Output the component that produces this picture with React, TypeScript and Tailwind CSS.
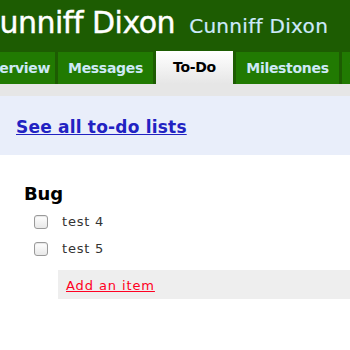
export default function App() {
  const tabs = [
    { label: "Overview", w: "w-[81px]", ml: "-ml-[26px]" },
    { label: "Messages", w: "w-[95px]" },
    { label: "To-Do", w: "w-[77px]", active: true },
    { label: "Milestones", w: "w-[103px]" },
    { label: "Writeboards", w: "w-[110px]" },
  ];

  return (
    <div className="w-[350px] h-[350px] overflow-hidden bg-white font-['DejaVu_Sans',sans-serif]">
      <div className="bg-[#1d5c02]">
        <div className="h-[52px] flex items-baseline whitespace-nowrap pt-[5px]">
          <h1 className="-ml-[21px] text-[30px] leading-[36px] text-white tracking-[-0.5px] [-webkit-text-stroke:0.4px_white]">Cunniff Dixon</h1>
          <span className="ml-[14px] text-[20px] text-[#cdeafc] tracking-[0.3px] [-webkit-text-stroke:0.2px_#cdeafc]">Cunniff Dixon</span>
        </div>
        <div className="flex gap-[3px] h-[32px] whitespace-nowrap">
          {tabs.map((t) => (
            <div
              key={t.label}
              className={`${t.w} ${t.ml ?? ""} shrink-0 flex items-center justify-center text-[14px] font-bold tracking-[-0.3px] ${
                t.active
                  ? "bg-gradient-to-b from-white to-[#e6e6e6] text-black -mt-[1px] h-[33px]"
                  : "bg-[#217a02] text-[#cde9f6]"
              }`}
            >
              {t.label}
            </div>
          ))}
        </div>
      </div>
      <div className="h-[12px] bg-[#e6e6e6]" />
      <div className="h-[59px] bg-[#e9eefa] flex items-center pl-[16px]">
        <a href="#" className="text-[17px] font-bold text-[#2222c2] underline tracking-[0.2px] pt-[4px]">
          See all to-do lists
        </a>
      </div>
      <div className="pl-[24px] pt-[28px]">
        <h2 className="text-[18px] font-bold text-black leading-[22px] tracking-[-0.2px]">Bug</h2>
        <ul className="mt-[7px] flex flex-col gap-[7px]">
          {["test 4", "test 5"].map((item) => (
            <li key={item} className="flex items-center h-[20px] pl-[10px] text-[13px] text-[#333] tracking-[0.8px]">
              <span className="w-[14px] h-[14px] rounded-[3px] border border-[#9a9a9a] bg-gradient-to-b from-white to-[#e8e8e8] shadow-[inset_0_1px_1px_rgba(0,0,0,0.1)]" />
              <span className="ml-[14px]">{item}</span>
            </li>
          ))}
        </ul>
        <div className="ml-[34px] mt-[11px] h-[29px] bg-[#eeeeee] flex items-center pl-[8px]">
          <a href="#" className="text-[13px] text-[#ff0022] underline tracking-[0.9px] pt-[2px]">
            Add an item
          </a>
        </div>
      </div>
    </div>
  );
}
